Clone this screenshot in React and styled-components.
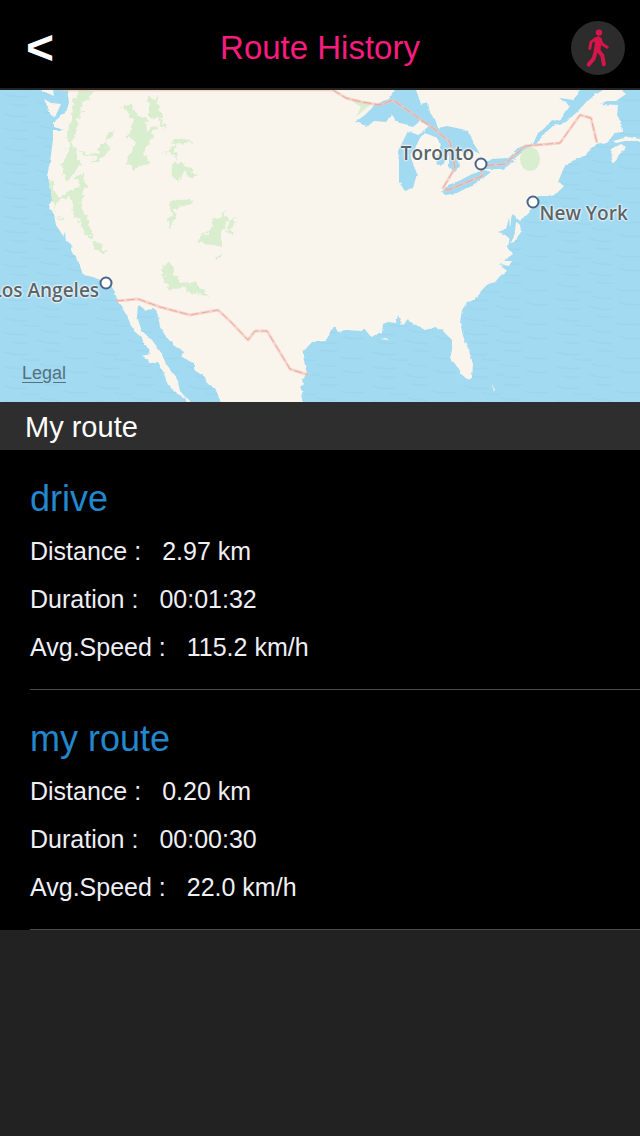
import styled, { createGlobalStyle } from "styled-components";

const GlobalStyle = createGlobalStyle`
  * {
    box-sizing: border-box;
  }

  body {
    margin: 0;
    background-color: #222222;
    font-family: "Liberation Sans", Arial, sans-serif;
  }
`;

const Header = styled.header`
  display: flex;
  align-items: center;
  justify-content: space-between;
  height: 90px;
  padding: 8px 15px 0;
  background-color: #000000;
  border-bottom: 2px solid #222222;
`;

const HeaderButton = styled.button`
  display: flex;
  align-items: center;
  justify-content: center;
  width: 54px;
  height: 54px;
  padding: 0;
  border: 0;
  border-radius: 50%;
  background-color: ${(props) => props.$fill || "transparent"};
  cursor: pointer;
`;

const BackButton = styled(HeaderButton)`
  justify-content: flex-start;
  padding-left: 11px;
  color: #ffffff;
  font-family: "Liberation Sans", Arial, sans-serif;
  font-size: 48px;
  font-weight: bold;
  line-height: 54px;
`;

const Title = styled.h1`
  margin: 0;
  color: #f91c7e;
  font-size: 33px;
  font-weight: normal;
  line-height: 40px;
`;

const MapArea = styled.section`
  position: relative;
  aspect-ratio: 640 / 312;
  overflow: hidden;
  background-color: #a2daf1;
`;

const MapDrawing = styled.svg`
  display: block;
  width: 100%;
  height: 100%;
`;

const City = styled.span`
  position: absolute;
  left: ${(props) => props.$x}%;
  top: ${(props) => props.$y}%;
  width: 13px;
  height: 13px;
  border: 2px solid #4a6684;
  border-radius: 50%;
  background-color: #ffffff;
  transform: translate(-50%, -50%);
`;

const labelPlaces = {
  above: "right: 11px; bottom: 4px;",
  before: "right: 11px; top: -1px;",
  after: "left: 11px; top: 3px;",
};

const CityName = styled.span`
  position: absolute;
  ${(props) => labelPlaces[props.$place]}
  color: #5b6468;
  font-family: "Open Sans", "Noto Sans", sans-serif;
  font-size: 19px;
  font-weight: 600;
  line-height: 24px;
  white-space: nowrap;
  text-shadow: 0 0 2px #ffffff, 0 0 2px #ffffff, 0 0 3px #ffffff;
`;

const LegalLink = styled.a`
  position: absolute;
  left: 22px;
  bottom: 18px;
  color: #53717f;
  font-size: 18px;
  line-height: 22px;
  text-underline-offset: 3px;
`;

const SectionTitle = styled.h2`
  margin: 0;
  padding: 2px 25px 0;
  background-color: #2e2e2e;
  color: #ffffff;
  font-size: 29px;
  font-weight: normal;
  line-height: 46px;
`;

const RouteList = styled.ul`
  margin: 0;
  padding: 0 0 0 30px;
  background-color: #000000;
  list-style: none;
`;

const RouteItem = styled.li`
  padding: 27px 0 18px;
  border-bottom: 1px solid #4c4c4c;
`;

const RouteName = styled.h3`
  margin: 0 0 6px;
  color: #2387cd;
  font-size: 36px;
  font-weight: normal;
  line-height: 44px;
`;

const Stats = styled.dl`
  margin: 0;
  color: #efeff4;
  font-size: 25px;
  line-height: 48px;
`;

const Stat = styled.div`
  display: flex;
  gap: 21px;

  dd {
    margin: 0;
  }
`;

const cities = [
  { name: "Toronto", x: 75.1, y: 23.7, place: "above" },
  { name: "New York", x: 83.3, y: 35.9, place: "after" },
  { name: "Los Angeles", x: 16.5, y: 61.9, place: "before" },
];

const routes = [
  { name: "drive", distance: "2.97 km", duration: "00:01:32", speed: "115.2 km/h" },
  { name: "my route", distance: "0.20 km", duration: "00:00:30", speed: "22.0 km/h" },
];

const WalkIcon = () => (
  <svg width="54" height="54" viewBox="0 0 54 54" fill="none" stroke="#d9144b" strokeLinecap="round" strokeLinejoin="round" aria-hidden="true">
    <circle cx="28" cy="11.6" r="3.2" fill="#d9144b" stroke="none" />
    <path d="M23.3 17.8 27.3 15.8 30.4 18 29.3 24 28.8 29 23.5 29.5 24.6 22Z" fill="#d9144b" strokeWidth="1.4" />
    <path d="M24.5 17.8 19.9 21.2 18.8 27.6M28.8 18.2 31.4 23.2 36.2 26.3" strokeWidth="2.9" />
    <path d="M25.4 28 22.7 37.5 17.7 43.6M26 28 31.3 34.5 32.9 43.3" strokeWidth="4" />
  </svg>
);

const RouteMap = () => (
  <MapDrawing viewBox="0 0 640 312" preserveAspectRatio="xMidYMid slice" aria-hidden="true">
    <defs>
      <pattern id="waves" width="92" height="34" patternUnits="userSpaceOnUse">
        <path
          d="M2 4q12 4 26 2M40 2q10 3 20 2M66 8q10 4 22 2M10 14q8 2 18 1M36 12q12 5 24 3M4 24q14 4 24 2M44 22q12 2 18 1M64 29q10 3 24 1M22 31q8 2 18 1"
          fill="none"
          stroke="#8fcde8"
          strokeWidth="1.5"
          opacity="0.3"
        />
      </pattern>
      <filter id="coast" x="0" y="0" width="100%" height="100%">
        <feTurbulence type="fractalNoise" baseFrequency="0.16" numOctaves="2" seed="4" />
        <feDisplacementMap in="SourceGraphic" scale="3" xChannelSelector="R" yChannelSelector="G" />
      </filter>
      <filter id="woods" x="-5%" y="-5%" width="110%" height="110%">
        <feTurbulence type="fractalNoise" baseFrequency="0.18" numOctaves="2" seed="9" />
        <feDisplacementMap in="SourceGraphic" scale="10" xChannelSelector="R" yChannelSelector="G" />
      </filter>
    </defs>
    <rect width="640" height="312" fill="#a2daf1" />
    <rect width="640" height="312" fill="url(#waves)" />

    {/* land */}
    <g fill="#f9f5ed" filter="url(#coast)">
      <path d="M67 -9 67 0 69 12 66 23 60 25 54 33 54 37 64 40 53 40 53 50 50 72 47 86 51 98 52 108 49 118 54 125 56 135 60 141 63 146 65 142 66 151 73 157 70 158 73 164 78 170 80 176 83 185 93 187 103 191 111 196 115 202 118 212 123 219 128 228 133 240 141 247 147 257 150 264 142 266 148 269 149 273 157 272 164 283 168 295 176 303 185 308 190 320 194 320 190 312 180 301 177 288 167 275 160 261 152 250 142 241 137 227 138 214 145 220 155 219 158 225 160 237 165 245 173 255 184 262 182 268 194 273 194 280 205 287 207 294 215 298 221 312 224 320 303 320 303 312 302 300 300 297 303 294 302 289 307 284 303 266 303 262 312 252 326 251 331 240 335 237 338 242 346 240 362 241 364 238 371 247 382 243 383 234 388 232 396 233 398 225 402 235 408 229 411 234 417 235 426 241 435 237 442 240 452 250 452 260 450 268 456 275 460 283 468 290 472 288 473 274 469 261 463 246 460 232 462 220 467 212 475 208 483 199 487 195 495 192 500 186 507 181 499 174 509 176 512 171 503 171 513 164 508 157 510 147 498 142 506 139 509 128 510 138 515 143 511 153 514 152 521 142 520 135 515 130 512 124 520 131 529 123 534 114 538 106 548 106 557 103 564 96 558 92 563 80 570 72 584 66 590 60 597 54 607 52 615 43 622 42 621 32 617 25 618 15 600 14 607 11 616 11 626 4 621 0 621 -9Z" />
      <path d="M40 0 53 0 54 6ZM44 9 51 13 61 14 55 27 50 23ZM611 65 612 59 621 54 626 57 618 67 613 73ZM613 51 628 47 640 49 640 51 625 51 616 53ZM492 294 495 299 494 302ZM380 249 386 248 389 250Z" />
    </g>

    {/* lakes and the Saint Lawrence */}
    <g fill="#a2daf1" filter="url(#coast)">
      <path d="M355 32 365 25 376 14 389 9 395 0 395 -9 416 -9 416 0 421 14 428 12 430 23 435 29 438 38 447 36 466 40 471 46 474 54 480 64 472 60 466 64 457 59 460 76 455 82 449 78 449 63 444 74 437 75 436 67 442 63 440 51 435 47 425 43 420 49 413 61 411 68 417 84 413 98 405 101 399 92 399 70 397 63 402 53 408 41 418 45 429 36 420 31 413 37 400 34 392 25 386 32 374 31 368 36Z" />
      <path d="M441 103 448 95 459 91 472 84 484 80 491 82 478 92 457 103 446 105ZM482 75 491 69 507 68 515 71 503 79 486 79Z" />
      <path d="M504 72 520 57 533 54 538 43 550 32 561 29 570 16 559 8 574 10 580 0 580 -9 603 -9 603 0 590 8 576 23 566 32 553 36 544 44 538 53 527 58 514 69Z" />
      <path d="M502 142 510 137 512 124 516 130 515 142 511 150Z" />
    </g>

    {/* forests */}
    <g fill="#d9edcf">
      <g filter="url(#woods)">
        <path d="M81 0 91 1 90 8 82 15 83 22 79 25 78 36 74 40 73 56 76 60 76 65 82 74 74 81 70 90 65 90 65 83 62 79 67 64 69 53 68 42 73 27 72 12Z" />
        <path d="M78 62 96 64 102 53 106 50 109 42 115 38 113 44 107 52 108 60 100 71 91 73 98 66 83 65Z" />
        <path d="M73 86 84 83 85 101 81 108 82 117 89 131 94 147 87 147 82 136 75 124 73 111 66 108 58 109 54 120 64 132 64 133 58 127 52 110 49 87 54 91 54 103 60 107 70 102 76 98 80 92Z" />
        <path d="M122 17 130 14 138 24 146 29 147 43 157 34 158 37 152 44 148 56 144 65 151 73 139 76 134 79 127 73 129 63 135 57 137 51 126 48 133 33 130 24ZM147 8 157 8 160 22 163 30 165 41 161 36 159 28 151 31 149 20Z" />
        <path d="M172 51 178 47 190 50 192 53 175 55 177 71 170 62 164 63 173 58ZM171 73 184 73 198 88 190 87 182 83 180 91 173 88ZM175 110 193 109 188 114 175 119 174 131 170 139 168 133 172 125 168 113Z" />
        <path d="M225 121 228 126 226 138 219 145 223 156 219 170 216 169 222 160 211 154 200 152 199 147 210 142 213 132 220 128ZM230 130 236 128 231 139 235 147 227 141ZM94 151 101 152 106 163 99 162 92 155Z" />
        <path d="M162 177 172 175 176 186 180 192 190 193 193 190 205 201 208 207 200 205 190 202 180 196 175 201 168 198 163 183Z" />
      </g>
      <path d="M349 9 373 13 366 18 356 27 361 17Z" />
      <ellipse cx="530" cy="69" rx="10" ry="12" />
    </g>

    {/* borders */}
    <g fill="none" strokeLinejoin="round">
      <g stroke="#f6c4ba" strokeWidth="3" opacity="0.65">
        <path d="M62 0H333L346 8 362 12 380 15 393 10 410 22 433 38 450 52 455 78 443 98 448 100 482 86 481 76 505 74 525 56 560 53 580 25 591 28 597 53" />
        <path d="M116 211 138 209 160 217 190 225 218 220 230 231 248 250 255 241 267 241 290 279 308 285" />
      </g>
      <g stroke="#e79d98" strokeWidth="1" strokeDasharray="8 3" opacity="0.8">
        <path d="M333 0 346 8 362 12 380 15 393 10 410 22 433 38 450 52 455 78 443 98 448 100 482 86 481 76 505 74 525 56 560 53 580 25 591 28 597 53" />
        <path d="M116 211 138 209 160 217 190 225 218 220 230 231 248 250 255 241 267 241 290 279 308 285" />
      </g>
    </g>
  </MapDrawing>
);

const RouteEntry = ({ route }) => {
  return (
    <RouteItem>
      <RouteName>{route.name}</RouteName>
      <Stats>
        <Stat>
          <dt>Distance :</dt>
          <dd>{route.distance}</dd>
        </Stat>
        <Stat>
          <dt>Duration :</dt>
          <dd>{route.duration}</dd>
        </Stat>
        <Stat>
          <dt>Avg.Speed :</dt>
          <dd>{route.speed}</dd>
        </Stat>
      </Stats>
    </RouteItem>
  );
};

const App = () => {
  return (
    <>
      <GlobalStyle />
      <Header>
        <BackButton type="button" aria-label="Back">&lt;</BackButton>
        <Title>Route History</Title>
        <HeaderButton type="button" $fill="#2c2c2c" aria-label="Walking routes">
          <WalkIcon />
        </HeaderButton>
      </Header>
      <main>
        <MapArea>
          <RouteMap />
          {cities.map((city) => (
            <City key={city.name} $x={city.x} $y={city.y}>
              <CityName $place={city.place}>{city.name}</CityName>
            </City>
          ))}
          <LegalLink href="#legal">Legal</LegalLink>
        </MapArea>
        <SectionTitle>My route</SectionTitle>
        <RouteList>
          {routes.map((route) => (
            <RouteEntry key={route.name} route={route} />
          ))}
        </RouteList>
      </main>
    </>
  );
};

export default App;
